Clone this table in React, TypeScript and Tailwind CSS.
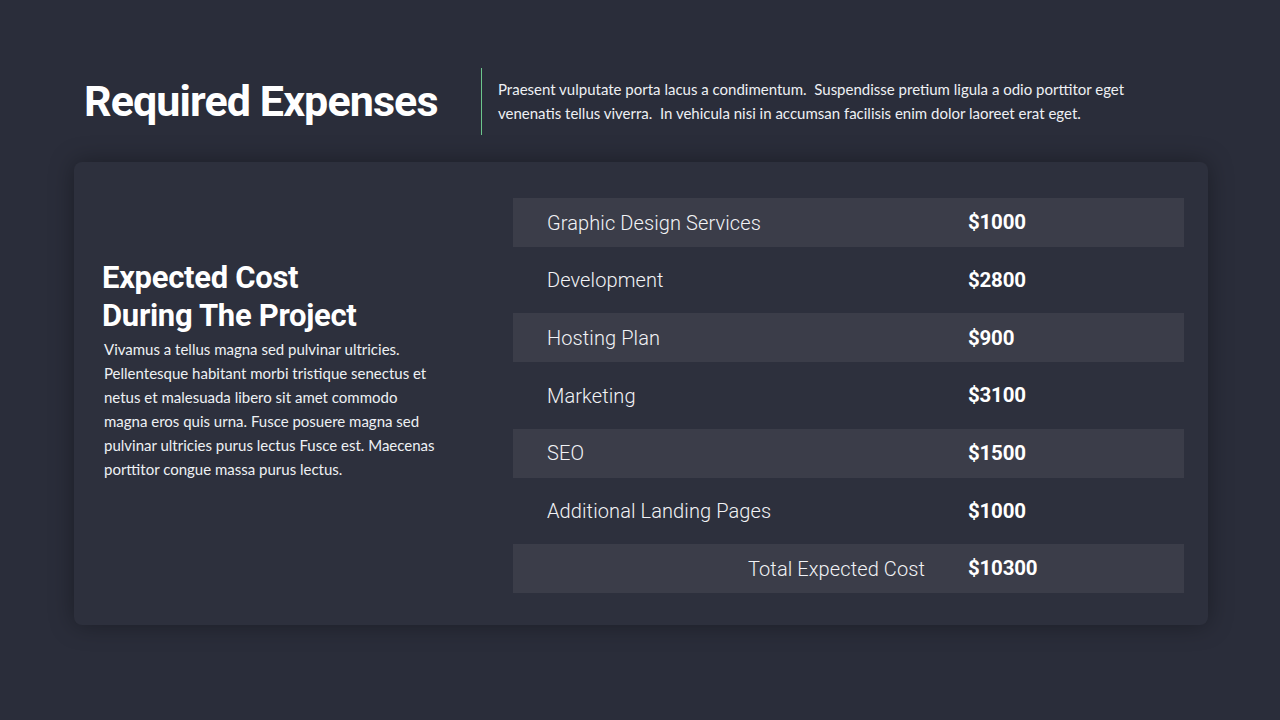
import React from 'react';

const rows = [
  { name: 'Graphic Design Services', cost: '$1000', shaded: true },
  { name: 'Development', cost: '$2800', shaded: false },
  { name: 'Hosting Plan', cost: '$900', shaded: true },
  { name: 'Marketing', cost: '$3100', shaded: false },
  { name: 'SEO', cost: '$1500', shaded: true },
  { name: 'Additional Landing Pages', cost: '$1000', shaded: false },
];

const headFont = { fontFamily: 'Roboto, "Noto Sans", sans-serif' };
const bodyFont = { fontFamily: 'Lato, "Open Sans", sans-serif' };

const App: React.FC = () => {
  return (
    <div className="w-[1280px] h-[720px] bg-[#2a2d3a] overflow-hidden text-white" style={bodyFont}>
      {/* Header */}
      <div className="flex items-center h-[162px] pl-[84px] pt-[40px]">
        <h1 className="w-[397px] text-[43px] font-bold tracking-[-0.9px] leading-none" style={headFont}>
          Required Expenses
        </h1>
        <div className="w-px h-[67px] bg-[#6cc68c]" />
        <p className="pl-[16px] w-[680px] text-[15px] leading-[24px] text-[#eef0f4]">
          Praesent vulputate porta lacus a condimentum.&nbsp; Suspendisse pretium ligula a odio porttitor eget
          venenatis tellus viverra.&nbsp; In vehicula nisi in accumsan facilisis enim dolor laoreet erat eget.
        </p>
      </div>

      {/* Card */}
      <div className="mx-[74px] w-[1134px] h-[463px] rounded-[8px] bg-[#2d303d] shadow-[0_0_24px_rgba(0,0,0,0.35)] flex">
        {/* Left column */}
        <div className="w-[439px] pl-[28px] pt-[97px]">
          <h2 className="text-[31px] font-bold leading-[38px] tracking-[-0.3px]" style={headFont}>
            Expected Cost
            <br />
            During The Project
          </h2>
          <p className="mt-[2px] pl-[2px] text-[15px] leading-[24px] text-[#eef0f4]">
            Vivamus a tellus magna sed pulvinar ultricies.
            <br />
            Pellentesque habitant morbi tristique senectus et
            <br />
            netus et malesuada libero sit amet commodo
            <br />
            magna eros quis urna. Fusce posuere magna sed
            <br />
            pulvinar ultricies purus lectus Fusce est. Maecenas
            <br />
            porttitor congue massa purus lectus.
          </p>
        </div>

        {/* Table */}
        <div className="w-[671px] pt-[36px] flex flex-col gap-[8.7px]" style={headFont}>
          {rows.map((row) => (
            <div
              key={row.name}
              className={`h-[49px] flex items-center text-[20px] ${row.shaded ? 'bg-[#3b3d49]' : ''}`}
            >
              <div className="w-[455px] pl-[34px] font-light tracking-[0.1px] text-[#f2f3f6]">{row.name}</div>
              <div className="font-bold text-[20.5px] tracking-[-0.2px]">{row.cost}</div>
            </div>
          ))}
          <div className="h-[49px] flex items-center text-[20px] bg-[#3b3d49]">
            <div className="w-[412px] text-right font-light tracking-[0.1px] text-[#f2f3f6]">Total Expected Cost</div>
            <div className="pl-[43px] font-bold text-[20.5px] tracking-[-0.2px]">$10300</div>
          </div>
        </div>
      </div>
    </div>
  );
};

export default App;
